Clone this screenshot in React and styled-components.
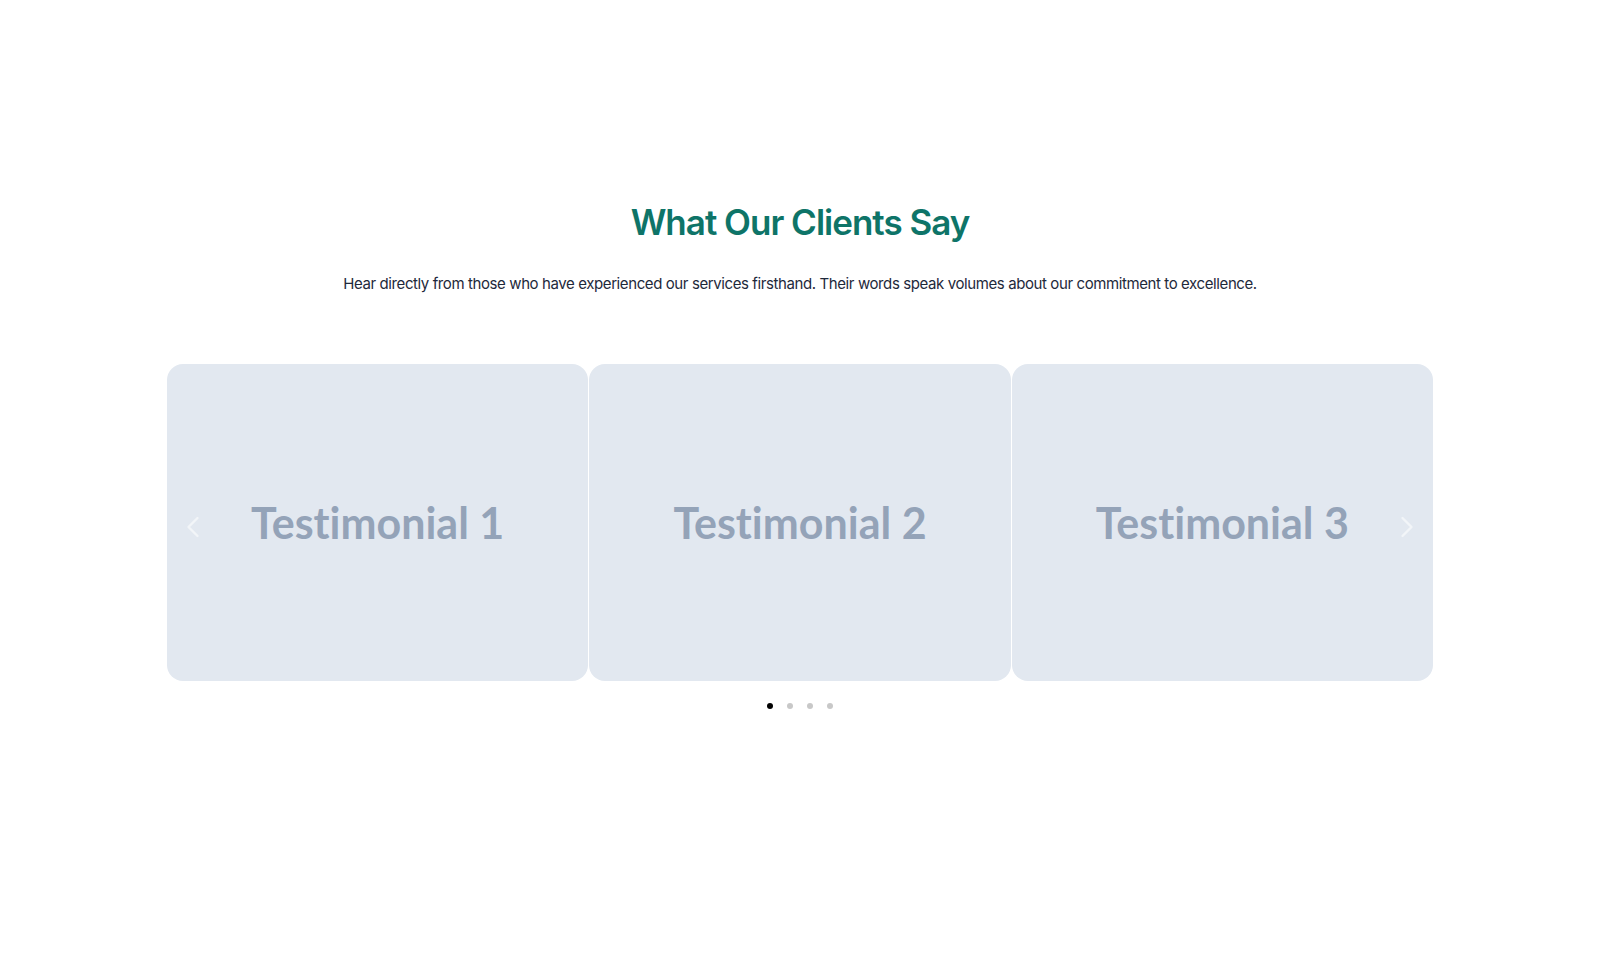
import React, { useState } from "react";
import styled, { createGlobalStyle } from "styled-components";
import { ChevronLeft, ChevronRight } from "lucide-react";

const GlobalStyle = createGlobalStyle`
  * { box-sizing: border-box; }
  body {
    margin: 0;
    background: #ffffff;
    font-family: "Inter", "Liberation Sans", sans-serif;
  }
`;

const Section = styled.section`
  display: flex;
  flex-direction: column;
  align-items: center;
  padding-top: 200px;
`;

const Title = styled.h2`
  margin: 0;
  font-size: 35px;
  line-height: 44px;
  font-weight: 600;
  letter-spacing: -1px;
  color: #0e7468;
`;

const Subtitle = styled.p`
  margin: 28px 0 0;
  font-size: 15px;
  line-height: 24px;
  letter-spacing: -0.4px;
  color: #1e293b;
`;

const Slider = styled.div`
  position: relative;
  margin-top: 68px;
  width: 1266px;
`;

const Track = styled.div`
  display: grid;
  grid-template-columns: repeat(3, 1fr);
  gap: 1px;
`;

const Card = styled.div`
  height: 317px;
  border-radius: 16px;
  background: #e2e8f0;
  display: flex;
  align-items: center;
  justify-content: center;
`;

const CardLabel = styled.span`
  font-family: "Lato", sans-serif;
  font-weight: 700;
  font-size: 43px;
  font-variant-ligatures: none;
  color: #94a3b8;
`;

const Arrow = styled.button`
  position: absolute;
  top: 50%;
  ${(p) => (p.side === "left" ? "left: 8px;" : "right: 8px;")}
  transform: translateY(-50%);
  margin-top: 4px;
  border: 0;
  padding: 0;
  background: none;
  color: rgba(255, 255, 255, 0.55);
  display: flex;
  cursor: pointer;
`;

const Dots = styled.div`
  display: flex;
  gap: 14px;
  margin-top: 22px;
`;

const Dot = styled.button`
  width: 6px;
  height: 6px;
  padding: 0;
  border: 0;
  border-radius: 50%;
  background: ${(p) => (p.active ? "#000000" : "#c8c8c8")};
  cursor: pointer;
`;

const testimonials = ["Testimonial 1", "Testimonial 2", "Testimonial 3"];

export default function App() {
  const [page, setPage] = useState(0);

  return (
    <>
      <GlobalStyle />
      <Section>
        <Title>What Our Clients Say</Title>
        <Subtitle>
          Hear directly from those who have experienced our services firsthand.
          Their words speak volumes about our commitment to excellence.
        </Subtitle>
        <Slider>
          <Track>
            {testimonials.map((t) => (
              <Card key={t}>
                <CardLabel>{t}</CardLabel>
              </Card>
            ))}
          </Track>
          <Arrow side="left" aria-label="Previous">
            <ChevronLeft size={36} strokeWidth={1.6} />
          </Arrow>
          <Arrow side="right" aria-label="Next">
            <ChevronRight size={36} strokeWidth={1.6} />
          </Arrow>
        </Slider>
        <Dots>
          {[0, 1, 2, 3].map((i) => (
            <Dot key={i} active={i === page} onClick={() => setPage(i)} />
          ))}
        </Dots>
      </Section>
    </>
  );
}
